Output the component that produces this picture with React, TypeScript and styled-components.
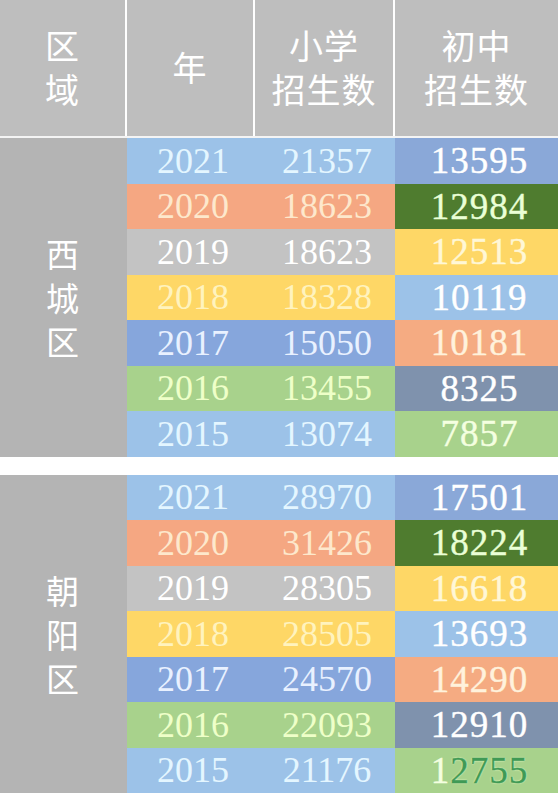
import React from "react";
import styled, { createGlobalStyle } from "styled-components";

interface Row {
  year: string;
  primary: string;
  middle: string;
  left: { bg: string; fg: string };
  right: { bg: string; fg: string };
  mark?: boolean;
}

interface District {
  name: string;
  rows: Row[];
}

const L_BLUE = { bg: "#9cc2e8", fg: "#e4f6ff" };
const L_ORANGE = { bg: "#f5a782", fg: "#fde8cc" };
const L_GRAY = { bg: "#c3c3c3", fg: "#ffffff" };
const L_YELLOW = { bg: "#fed766", fg: "#fff3be" };
const L_DBLUE = { bg: "#86a6dc", fg: "#e9f1ff" };
const L_GREEN = { bg: "#a8d28c", fg: "#eeffc8" };

const R_BLUE = { bg: "#8aa8d8", fg: "#ffffff" };
const R_DGREEN = { bg: "#4f7c2f", fg: "#eaffd6" };
const R_YELLOW = { bg: "#fed766", fg: "#fff7d6" };
const R_LBLUE = { bg: "#9cc2e8", fg: "#ffffff" };
const R_ORANGE = { bg: "#f5ab82", fg: "#fff2dc" };
const R_SLATE = { bg: "#7f92ad", fg: "#ffffff" };
const R_GREEN = { bg: "#a8d28c", fg: "#f4ffe0" };

const leftColors = [L_BLUE, L_ORANGE, L_GRAY, L_YELLOW, L_DBLUE, L_GREEN, L_BLUE];
const rightColors = [R_BLUE, R_DGREEN, R_YELLOW, R_LBLUE, R_ORANGE, R_SLATE, R_GREEN];
const years = ["2021", "2020", "2019", "2018", "2017", "2016", "2015"];

const build = (primary: string[], middle: string[]): Row[] =>
  years.map((year, i) => ({
    year,
    primary: primary[i],
    middle: middle[i],
    left: leftColors[i],
    right: rightColors[i],
  }));

const districts: District[] = [
  {
    name: "西城区",
    rows: build(
      ["21357", "18623", "18623", "18328", "15050", "13455", "13074"],
      ["13595", "12984", "12513", "10119", "10181", "8325", "7857"]
    ),
  },
  {
    name: "朝阳区",
    rows: build(
      ["28970", "31426", "28305", "28505", "24570", "22093", "21176"],
      ["17501", "18224", "16618", "13693", "14290", "12910", "12755"]
    ).map((r, i) => (i === 6 ? { ...r, mark: true } : r)),
  },
];

const GlobalStyle = createGlobalStyle`
  html, body {
    margin: 0;
    padding: 0;
    background: #ffffff;
  }
  body {
    font-family: "Liberation Serif", "Noto Sans CJK SC", serif;
  }
`;

export default function App() {
  return (
    <>
      <GlobalStyle />
      <Page>
        <Header>
          <HeadCell>
            <span>区</span>
            <span>域</span>
          </HeadCell>
          <HeadCell>
            <span>年</span>
          </HeadCell>
          <HeadCell>
            <span>小学</span>
            <span>招生数</span>
          </HeadCell>
          <HeadCell>
            <span>初中</span>
            <span>招生数</span>
          </HeadCell>
        </Header>
        {districts.map((d) => (
          <Section key={d.name}>
            <Region>
              {d.name.split("").map((c, i) => (
                <span key={i}>{c}</span>
              ))}
            </Region>
            {d.rows.map((r) => (
              <React.Fragment key={r.year}>
                <LeftPair $bg={r.left.bg} $fg={r.left.fg}>
                  <span>{r.year}</span>
                  <span>{r.primary}</span>
                </LeftPair>
                <RightCell $bg={r.right.bg} $fg={r.right.fg}>
                  {r.mark ? (
                    <>
                      {r.middle.slice(0, 1)}
                      <Marked>{r.middle.slice(1)}</Marked>
                    </>
                  ) : (
                    r.middle
                  )}
                </RightCell>
              </React.Fragment>
            ))}
          </Section>
        ))}
      </Page>
    </>
  );
}

// styled-components
const Page = styled.div`
  width: 558px;
  height: 794px;
  overflow: hidden;
  display: flex;
  flex-direction: column;
  gap: 18px;
`;

const Header = styled.div`
  display: grid;
  grid-template-columns: 125px 126px 138px 1fr;
  column-gap: 2px;
  height: 136px;
  border-bottom: 2px solid #f4f4f4;
  margin-bottom: -18px;
  background: #ffffff;
`;

const HeadCell = styled.div`
  background: #bebebe;
  color: #ffffff;
  display: flex;
  flex-direction: column;
  align-items: center;
  justify-content: center;
  font-family: "Liberation Serif", "Noto Sans CJK SC", serif;
  font-size: 34px;
  line-height: 44px;
  padding-top: 4px;
  letter-spacing: 1px;
`;

const Section = styled.section`
  display: grid;
  grid-template-columns: 127px 268px 1fr;
  grid-auto-rows: 45.5px;
`;

const Region = styled.div`
  grid-row: span 7;
  background: #b4b4b4;
  color: #ffffff;
  display: flex;
  flex-direction: column;
  align-items: center;
  justify-content: center;
  font-family: "Noto Sans CJK SC", sans-serif;
  font-size: 33px;
  line-height: 44px;
  padding-right: 2px;
`;

const LeftPair = styled.div<{ $bg: string; $fg: string }>`
  display: grid;
  grid-template-columns: 128px 140px;
  align-items: center;
  justify-items: center;
  background: ${(p) => p.$bg};
  color: ${(p) => p.$fg};
  font-size: 36px;
  line-height: 1;
  padding-left: 2px;
`;

const RightCell = styled.div<{ $bg: string; $fg: string }>`
  display: flex;
  align-items: center;
  justify-content: center;
  padding-left: 6px;
  background: ${(p) => p.$bg};
  color: ${(p) => p.$fg};
  font-family: "Liberation Serif", serif;
  font-size: 37px;
  font-weight: 400;
  -webkit-text-stroke: 0.4px currentColor;
  letter-spacing: 1px;
  line-height: 1;
`;

const Marked = styled.span`
  color: #3f9a55;
  -webkit-text-stroke: 0.4px #3f9a55;
  text-shadow: 0 0 2px #e8ffc8, 0 0 1px #e8ffc8;
`;
